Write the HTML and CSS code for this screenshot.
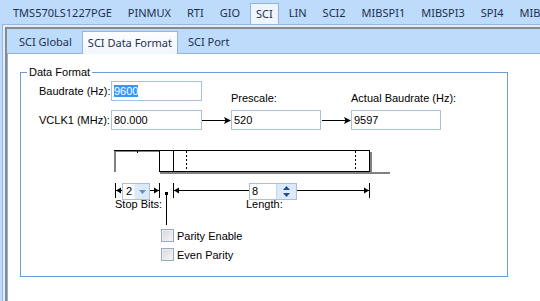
FILE: index.html
```html
<!DOCTYPE html>
<html lang="en">
<head>
    <meta charset="UTF-8">
    <title>SCI Data Format</title>
    <link rel="stylesheet" href="styles.css">
</head>
<body>
    <div class="tabs">
        <div class="tab">TMS570LS1227PGE</div>
        <div class="tab">PINMUX</div>
        <div class="tab">RTI</div>
        <div class="tab">GIO</div>
        <div class="tab active">SCI</div>
        <div class="tab">LIN</div>
        <div class="tab">SCI2</div>
        <div class="tab">MIBSPI1</div>
        <div class="tab">MIBSPI3</div>
        <div class="tab">SPI4</div>
        <div class="tab">MIB</div>
    </div>

    <div class="pane">
        <div class="inner">
            <div class="subtabs">
                <div class="subtab">SCI Global</div>
                <div class="subtab active">SCI Data Format</div>
                <div class="subtab">SCI Port</div>
            </div>

            <div class="page">
                <fieldset class="group">
                    <legend>Data Format</legend>

                    <div class="rates">
                        <div class="lbl baud-lbl">Baudrate (Hz):</div>
                        <div class="field baud-field"><span class="sel">9600</span></div>
                        <div class="lbl top-lbl pre-lbl">Prescale:</div>
                        <div class="lbl top-lbl act-lbl">Actual Baudrate (Hz):</div>

                        <div class="lbl row4">VCLK1 (MHz):</div>
                        <div class="field row4">80.000</div>
                        <svg class="arrow row4" width="29" height="20"><path d="M0 10.5H25" stroke="#000"/><path d="M22 7L29 10.5L22 14L23.5 10.5Z" fill="#000"/></svg>
                        <div class="field row4">520</div>
                        <svg class="arrow row4" width="30" height="20"><path d="M1 10.5H26" stroke="#000"/><path d="M23 7L30 10.5L23 14L24.5 10.5Z" fill="#000"/></svg>
                        <div class="field row4">9597</div>
                    </div>

                    <svg class="wave" width="280" height="28">
                        <rect x="2" y="2" width="2" height="22" fill="#808080"/>
                        <rect x="2" y="2" width="256" height="1" fill="#000"/>
                        <rect x="4" y="3" width="43" height="1" fill="#808080"/>
                        <rect x="25" y="3" width="1" height="2" fill="#000"/>
                        <rect x="48" y="24" width="230" height="2" fill="#808080"/>
                        <rect x="258" y="4" width="2" height="20" fill="#808080"/>
                        <rect x="47" y="2" width="1" height="22" fill="#000"/>
                        <rect x="47" y="23" width="211" height="1" fill="#000"/>
                        <rect x="257" y="2" width="1" height="22" fill="#000"/>
                        <rect x="61" y="2" width="1" height="22" fill="#000"/>
                        <path d="M74.5 3V23M243.5 3V23" stroke="#000" stroke-dasharray="2 2"/>
                    </svg>

                    <div class="dims">
                        <div class="bar"></div>
                        <svg width="6" height="15"><path d="M0 7.5H6" stroke="#000"/><path d="M0 7.5L5 4.5L5 10.5Z" fill="#000"/></svg>
                        <div class="combo">
                            <span class="combo-val">2</span>
                            <span class="combo-btn"><svg width="7" height="4"><path d="M0 0H7L3.5 4Z" fill="#6f8fb8"/></svg></span>
                        </div>
                        <svg width="9" height="15"><path d="M0 7.5H9" stroke="#000"/><path d="M9 7.5L4 4.5L4 10.5Z" fill="#000"/></svg>
                        <div class="bar"></div>
                        <div class="gap"></div>
                        <div class="bar"></div>
                        <svg width="75" height="15"><path d="M0 7.5H75" stroke="#000"/><path d="M0 7.5L5 4.5L5 10.5Z" fill="#000"/></svg>
                        <div class="spin">
                            <span class="spin-val">8</span>
                            <span class="spin-btn">
                                <svg width="7" height="4"><path d="M0 4H7L3.5 0Z" fill="#1f4f8f"/></svg>
                                <svg width="7" height="4"><path d="M0 0H7L3.5 4Z" fill="#1f4f8f"/></svg>
                            </span>
                        </div>
                        <svg width="72" height="15"><path d="M0 7.5H72" stroke="#000"/><path d="M72 7.5L67 4.5L67 10.5Z" fill="#000"/></svg>
                        <div class="bar"></div>
                        <div class="link"></div>
                    </div>

                    <div class="dim-labels">
                        <span class="stop-lbl">Stop Bits:</span>
                        <span>Length:</span>
                    </div>

                    <div class="checks">
                        <label class="check"><span class="box"></span>Parity Enable</label>
                        <label class="check"><span class="box"></span>Even Parity</label>
                    </div>
                </fieldset>
            </div>
        </div>
    </div>
</body>
</html>
```

FILE: styles.css
```css
* {
    margin: 0;
    padding: 0;
    box-sizing: border-box;
}

body {
    font-family: "Noto Sans", sans-serif;
    font-size: 11px;
    background-color: #bddbfb;
    height: 301px;
    overflow: hidden;
}

.tabs {
    display: flex;
    align-items: flex-end;
    height: 24px;
    padding-left: 5px;
    white-space: nowrap;
    overflow: hidden;
    color: #1e2f50;
}

.tab {
    height: 22px;
    line-height: 22px;
    padding: 0 8px;
}

.tab.active {
    position: relative;
    z-index: 1;
    height: 22px;
    line-height: 20px;
    margin: 0 2px -1px;
    padding: 0 5px;
    border: 1px solid #98b3d8;
    border-bottom: none;
    background: #eef5fd;
}

.pane {
    margin-left: 2px;
    height: 277px;
    padding: 2px 0 0 2px;
    border-left: 1px solid #98b6df;
    border-top: 1px solid #98b6df;
    background: #e2eefc;
}

.inner {
    height: 100%;
    border-left: 2px solid #8a8a8a;
    border-top: 2px solid #8a8a8a;
    background: #bddbfb;
}

.subtabs {
    display: flex;
    align-items: flex-end;
    height: 24px;
    padding-left: 4px;
    color: #1e2f50;
    white-space: nowrap;
}

.subtab {
    height: 22px;
    line-height: 22px;
    padding: 0 8px;
}

.subtab.active {
    position: relative;
    z-index: 1;
    height: 23px;
    line-height: 21px;
    margin: 0 2px -1px;
    padding: 0 5px;
    border: 1px solid #98b3d8;
    border-bottom: none;
    background: linear-gradient(#fbfdff, #f2f7fe);
}

.page {
    height: 260px;
    padding: 12px 0 0 12px;
    border-left: 1px solid #8eb0de;
    border-top: 1px solid #8eb0de;
    background: white;
    font-family: "Liberation Sans", Arial, sans-serif;
    color: #000;
}

.group {
    width: 488px;
    height: 211px;
    min-width: 0;
    border: 1px solid #6c9bd6;
}

.group legend {
    margin-left: 6px;
    padding: 0 2px;
    line-height: 13px;
}

.rates {
    display: grid;
    grid-template-columns: 72px 91px 29px 90px 30px 90px;
    grid-template-rows: 10px 14px 5px 20px;
    margin: 2px 0 0 18px;
}

.lbl {
    line-height: 20px;
    white-space: nowrap;
}

.baud-lbl,
.baud-field {
    grid-row: 1 / 3;
    align-self: start;
}

.baud-lbl {
    grid-column: 1;
}

.baud-field {
    grid-column: 2;
}

.top-lbl {
    grid-row: 2;
    line-height: 14px;
}

.pre-lbl {
    grid-column: 4;
}

.act-lbl {
    grid-column: 6;
}

.row4 {
    grid-row: 4;
}

.field {
    height: 20px;
    padding-left: 2px;
    line-height: 18px;
    border: 1px solid #a9bfdc;
    background: white;
}

.sel {
    background: #3399ff;
    color: white;
}

.arrow {
    display: block;
}

.wave {
    display: block;
    margin: 18px 0 0 91px;
}

.dims {
    position: relative;
    display: flex;
    align-items: flex-start;
    height: 18px;
    margin: 7px 0 0 94px;
}

.dims svg {
    display: block;
}

.bar {
    width: 1px;
    height: 15px;
    background: #000;
}

.gap {
    width: 13px;
}

.combo {
    display: flex;
    width: 28px;
    height: 17px;
    border: 1px solid #a9bfdc;
    background: white;
}

.combo-val {
    width: 11px;
    padding-left: 3px;
    line-height: 15px;
}

.combo-btn {
    display: flex;
    flex: 1;
    align-items: center;
    justify-content: center;
    background: #dce9f8;
    border-left: 1px solid #eef4fc;
}

.spin {
    display: flex;
    width: 48px;
    height: 17px;
    border: 1px solid #a9bfdc;
    background: white;
}

.spin-val {
    width: 26px;
    padding-left: 2px;
    line-height: 15px;
}

.spin-btn {
    display: flex;
    flex: 1;
    flex-direction: column;
    align-items: center;
    justify-content: space-around;
    background: #dce9f8;
    border-left: 1px solid #c5d7ee;
}

.spin-btn svg {
    display: block;
}

/* connector from the parity slot down to the checkbox */
.link {
    position: absolute;
    left: 51px;
    top: 12px;
    width: 1px;
    height: 30px;
    background: #000;
}

.link::before {
    content: "";
    position: absolute;
    left: -1px;
    top: -3px;
    width: 3px;
    height: 3px;
    background: #000;
}

.dim-labels {
    display: flex;
    margin: -3px 0 0 94px;
    line-height: 13px;
}

.stop-lbl {
    width: 131px;
}

.checks {
    display: flex;
    flex-direction: column;
    gap: 6px;
    margin: 18px 0 0 140px;
}

.check {
    display: flex;
    align-items: center;
    gap: 3px;
    height: 13px;
}

.box {
    width: 13px;
    height: 13px;
    border: 1px solid #97a9c4;
    background: linear-gradient(135deg, #d6d6d6, #f7f7f7);
    box-shadow: inset 0 0 0 1px #eeeeee;
}
```
